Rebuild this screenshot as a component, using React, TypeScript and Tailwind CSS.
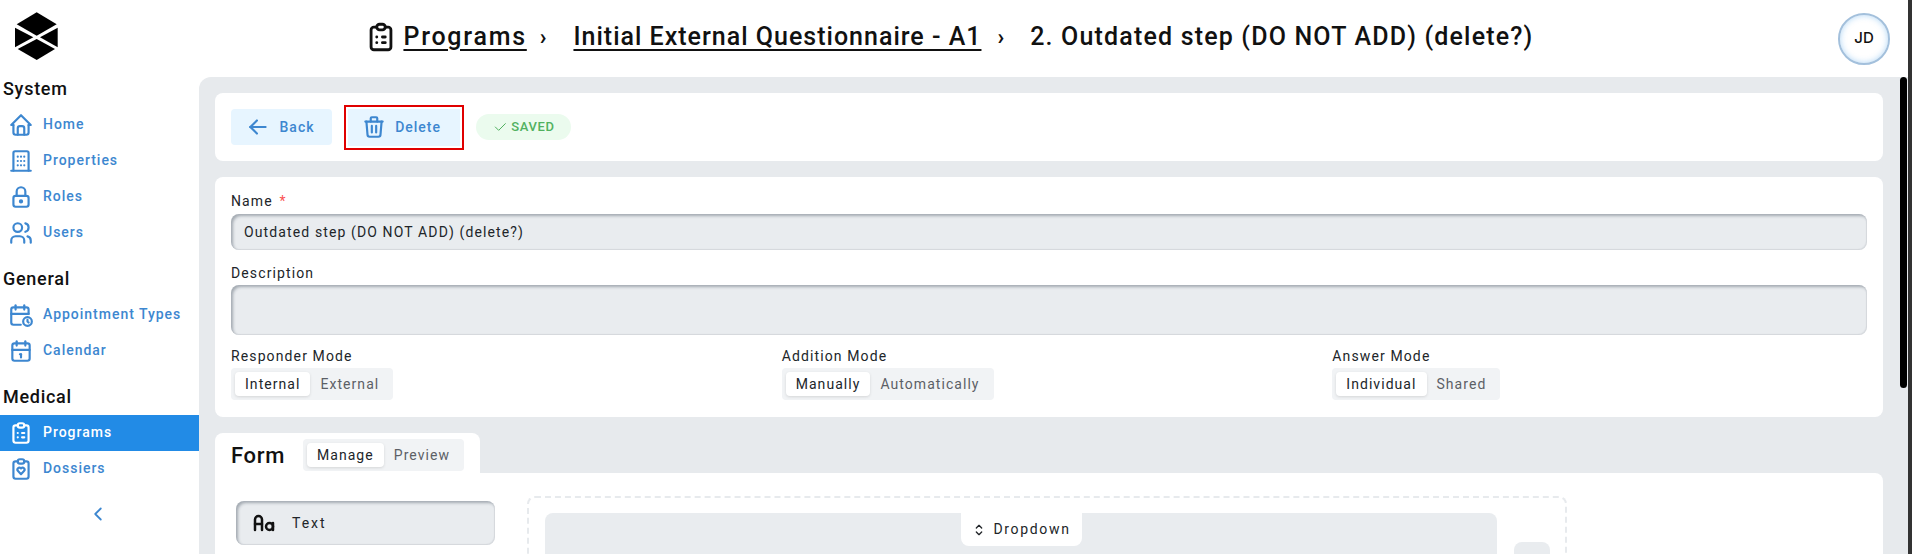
import {
  TbArrowLeft,
  TbCalendar,
  TbCalendarTime,
  TbCheck,
  TbChevronLeft,
  TbClipboardHeart,
  TbClipboardList,
  TbHome,
  TbLetterCase,
  TbLock,
  TbSelector,
  TbTrash,
  TbUsers,
} from "react-icons/tb";

type IconProps = { className?: string };
type NavItem = { label: string; icon: (props: IconProps) => React.ReactNode; active?: boolean };

function BuildingIcon({ className }: IconProps) {
  return (
    <svg
      viewBox="0 0 24 24"
      fill="none"
      stroke="currentColor"
      strokeWidth="2"
      strokeLinecap="round"
      strokeLinejoin="round"
      className={className}
    >
      <path d="M3 21h18" />
      <path d="M5 21V4.500A1.500 1.500 0 0 1 6.500 3h11A1.500 1.500 0 0 1 19 4.500V21" />
      <path d="M9 8h.01M12 8h.01M15 8h.01M9 12h.01M12 12h.01M15 12h.01M9 16h.01M12 16h.01M15 16h.01" />
    </svg>
  );
}

const navGroups: { title: string; items: NavItem[] }[] = [
  {
    title: "System",
    items: [
      { label: "Home", icon: TbHome },
      { label: "Properties", icon: BuildingIcon },
      { label: "Roles", icon: TbLock },
      { label: "Users", icon: TbUsers },
    ],
  },
  {
    title: "General",
    items: [
      { label: "Appointment Types", icon: TbCalendarTime },
      { label: "Calendar", icon: TbCalendar },
    ],
  },
  {
    title: "Medical",
    items: [
      { label: "Programs", icon: TbClipboardList, active: true },
      { label: "Dossiers", icon: TbClipboardHeart },
    ],
  },
];

function Logo() {
  return (
    <svg viewBox="15 12 43 48" className="h-[48px] w-[43px] fill-black">
      <polygon points="36.700,12.300 56.700,24.300 36.700,35.700 16.700,24.300" />
      <polygon points="15,27.700 33.300,37.300 15,47.300" />
      <polygon points="57.700,27.700 40,37.300 57.700,47.300" />
      <polygon points="36.700,60 55,49 36.700,39 17.700,49" />
    </svg>
  );
}

function Segmented({ options }: { options: string[] }) {
  return (
    <div className="flex w-fit rounded bg-[#f1f3f5] p-1 text-[14px] leading-6 tracking-[0.075em]">
      {options.map((option, i) => (
        <span
          key={option}
          className={
            i === 0
              ? "rounded bg-white px-2.5 text-[#212529] shadow-[0_1px_3px_rgba(0,0,0,0.12)]"
              : "px-2.5 text-[#5c5f66]"
          }
        >
          {option}
        </span>
      ))}
    </div>
  );
}

function ModeField({ label, options }: { label: string; options: string[] }) {
  return (
    <div className="flex flex-col">
      <label className="mb-[3px] text-[14px] leading-[17px] tracking-[0.08em] text-[#212529]">{label}</label>
      <Segmented options={options} />
    </div>
  );
}

const inputClass =
  "rounded-lg bg-[#e9ecef] shadow-[inset_2px_2px_3px_rgba(80,90,105,0.45),inset_-1px_-1px_1px_rgba(80,90,105,0.12)] text-[14px] tracking-[0.08em] text-[#212529]";

export default function App() {
  return (
    <div className="relative flex h-[554px] w-[1912px] flex-col overflow-hidden bg-white font-['Roboto',sans-serif]">
      <header className="flex h-[77px] shrink-0 items-center">
        <div className="w-[199px] pb-[5px] pl-[15px]">
          <Logo />
        </div>
        <nav className="flex flex-1 items-center justify-center pb-[4px] pr-[2px] text-[25px] font-medium text-[#111]">
          <TbClipboardList className="mr-[5px] size-[34px]" />
          <a className="tracking-[0.07em] underline underline-offset-4">Programs</a>
          <span className="ml-[13px] mr-[27px] text-[22px] font-bold">›</span>
          <a className="tracking-[0.04em] underline underline-offset-4">Initial External Questionnaire - A1</a>
          <span className="ml-[16px] mr-[26px] text-[22px] font-bold">›</span>
          <span className="tracking-[0.047em]">2. Outdated step (DO NOT ADD) (delete?)</span>
        </nav>
        <div className="flex w-[211px] justify-end pr-[22px]">
          <div className="flex size-[52px] items-center justify-center rounded-full border-2 border-[#a3c0dc] bg-white font-['Inter',sans-serif] text-[15px] font-medium text-[#111] shadow-[inset_0_0_6px_rgba(34,139,230,0.35)]">
            JD
          </div>
        </div>
      </header>

      <div className="flex min-h-0 flex-1">
        <aside className="flex w-[199px] shrink-0 flex-col">
          {navGroups.map((group) => (
            <div key={group.title} className="mb-[16.500px]">
              <h2 className="mb-[5.500px] pl-[3px] text-[18px] font-medium leading-6 tracking-[0.04em] text-[#111]">
                {group.title}
              </h2>
              {group.items.map((item) => (
                <a
                  key={item.label}
                  className={`flex h-9 items-center gap-[9px] pl-[8px] text-[14px] font-medium tracking-[0.07em] ${
                    item.active ? "bg-[#228be6] text-white" : "text-[#3d87d0]"
                  }`}
                >
                  <item.icon className="size-[26px] shrink-0" />
                  {item.label}
                </a>
              ))}
            </div>
          ))}
          <div className="flex justify-center pr-[4px] text-[#3d87d0]">
            <TbChevronLeft className="size-[22px]" />
          </div>
        </aside>

        <main className="flex min-w-0 flex-1 flex-col gap-4 overflow-hidden rounded-tl-xl bg-[#e7eaed] py-4 pl-4 pr-[29px]">
          <section className="flex h-[68px] shrink-0 items-center gap-3 rounded-lg bg-white px-4">
            <button className="flex h-9 w-[101px] items-center justify-center gap-[9px] rounded bg-[#e7f5ff] pr-[4px] text-[14px] font-medium tracking-[0.07em] text-[#3d87d0]">
              <TbArrowLeft className="size-[26px]" />
              Back
            </button>
            <button className="h-[45px] w-[120px] border-[2px] border-[#e00000] p-[2px] text-[14px] font-medium tracking-[0.07em] text-[#3d87d0]">
              <span className="flex h-full items-center justify-center gap-[8px] bg-[#e7f5ff] pr-[6px]">
                <TbTrash className="size-[26px]" />
                Delete
              </span>
            </button>
            <span className="flex h-[26px] w-[95px] items-center justify-center gap-[3px] rounded-full bg-[#ebfbee] text-[13px] font-medium tracking-[0.05em] text-[#51b160]">
              <TbCheck className="size-[16px] stroke-[1.5]" />
              SAVED
            </span>
          </section>

          <section className="flex h-[240px] shrink-0 flex-col rounded-lg bg-white px-4 pt-[15px]">
            <label className="mb-[3px] text-[14px] leading-[19px] tracking-[0.08em] text-[#212529]">
              Name <span className="ml-[2px] text-[#fa5252]">*</span>
            </label>
            <div className={`${inputClass} flex h-[36px] items-center px-[13px]`}>
              Outdated step (DO NOT ADD) (delete?)
            </div>
            <label className="mb-[2px] mt-[14px] text-[14px] leading-[19px] tracking-[0.08em] text-[#212529]">
              Description
            </label>
            <div className={`${inputClass} h-[50px]`} />
            <div className="mt-[13px] grid grid-cols-3 gap-x-4">
              <ModeField label="Responder Mode" options={["Internal", "External"]} />
              <ModeField label="Addition Mode" options={["Manually", "Automatically"]} />
              <ModeField label="Answer Mode" options={["Individual", "Shared"]} />
            </div>
          </section>

          <section className="flex min-h-0 flex-1 flex-col">
            <div className="flex h-[40px] w-[265px] shrink-0 items-center gap-[18px] rounded-t-lg bg-white px-4 pt-1">
              <h3 className="text-[22px] font-medium tracking-[0.03em] text-[#111]">Form</h3>
              <Segmented options={["Manage", "Preview"]} />
            </div>
            <div className="flex flex-1 items-start gap-[32px] rounded-b-lg rounded-tr-lg bg-white pl-[21px] pt-[23px]">
              <div
                className={`${inputClass} mt-[5px] flex h-[44px] w-[259px] shrink-0 items-center gap-[16px] pl-[16px]`}
              >
                <TbLetterCase className="size-[24px] stroke-[2.5] text-[#111]" />
                <span className="tracking-[0.14em]">Text</span>
              </div>
              <div className="flex h-[120px] w-[1040px] items-start gap-[17px] rounded-t-lg border-2 border-dashed border-[#e7eaed] py-[15px] pl-[16px] pr-[14px]">
                <div className="flex h-[100px] w-[952px] shrink-0 justify-center rounded-lg bg-[#e9ecef]">
                  <div className="flex h-[33px] w-[121px] items-center justify-center gap-[6px] rounded-b-lg bg-white text-[14px] tracking-[0.12em] text-[#212529]">
                    <TbSelector className="size-[16px]" />
                    Dropdown
                  </div>
                </div>
                <div className="mt-[29px] h-[36px] w-[36px] shrink-0 rounded-lg bg-[#e9ecef]" />
              </div>
            </div>
          </section>
        </main>
      </div>

      <div className="absolute bottom-[166px] right-[5px] top-[77px] w-[7px] rounded-full bg-black" />
      <div className="absolute bottom-0 right-0 top-0 w-[4px] bg-[#333]" />
    </div>
  );
}
